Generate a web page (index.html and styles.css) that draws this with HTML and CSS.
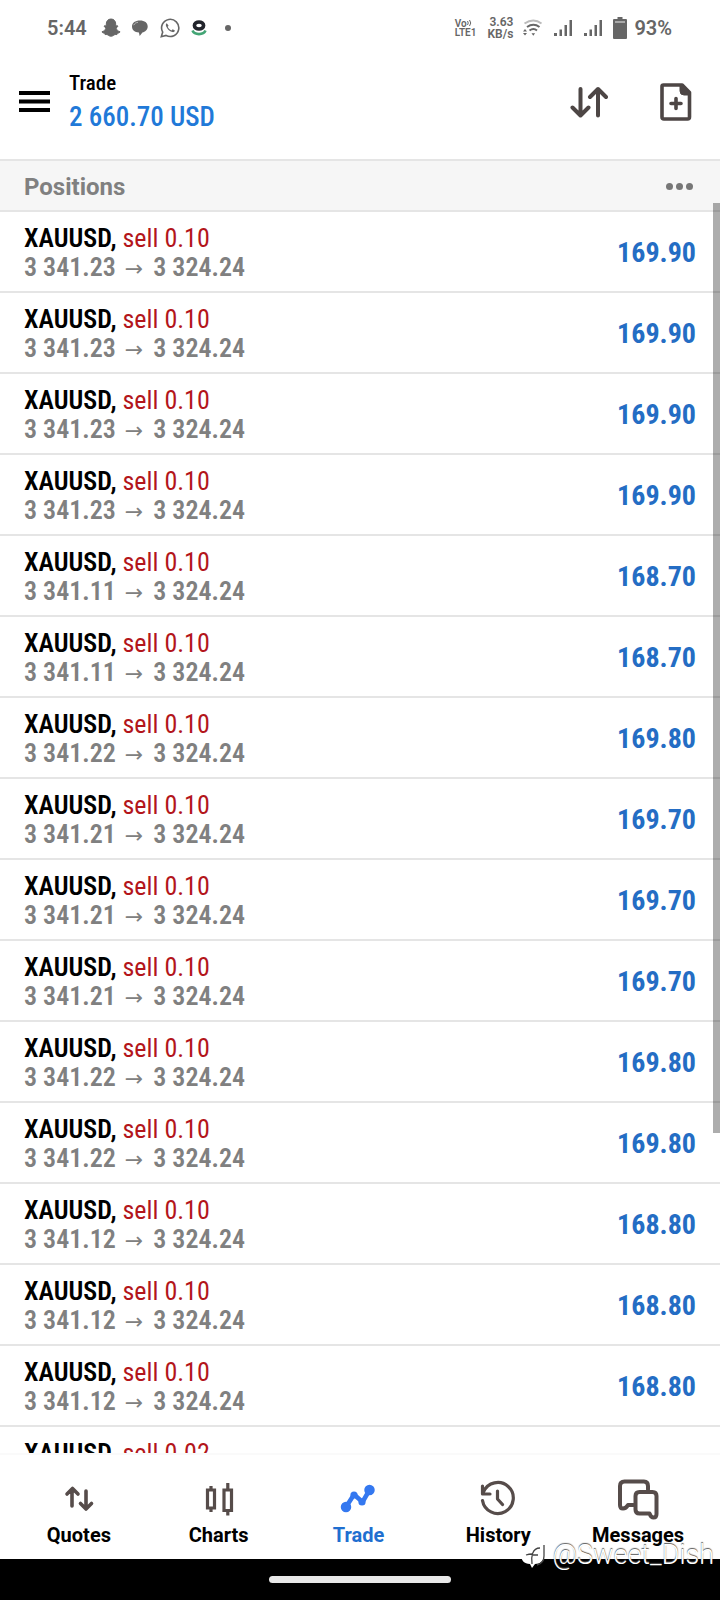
FILE: index.html
```
<!DOCTYPE html>
<html lang="en">
<head>
<meta charset="utf-8">
<meta name="viewport" content="width=device-width, initial-scale=1">
<title>Trade</title>
<link rel="stylesheet" href="styles.css">
</head>
<body>
<div class="app">
  <div class="status">
    <span class="clock">5:44</span>
    <svg class="s-snap" width="20" height="20" viewBox="0 0 20 20" fill="#666"><path d="M10 1c3 0 4.700 2.200 4.700 5v2l1.800-.3.300.9-1.900 1.300c.8 2 2 3.200 4.100 3.900-.2 1-1.500 1.300-2.700 1.500l-.4 1.300c-1.500-.3-2.300 0-3.200.7-1.600 1.200-3.800 1.200-5.400 0-.9-.7-1.700-1-3.200-.7l-.4-1.300C2.500 15.100 1.200 14.800 1 13.800c2.100-.7 3.300-1.900 4.100-3.900L3.200 8.600l.3-.9 1.800.3V6C5.300 3.200 7 1 10 1z" stroke="#666"/></svg>
    <svg class="s-chat" width="18" height="18" viewBox="0 0 18 18" fill="#666"><path d="M9 1.500c4.600 0 7.700 2.300 7.700 6 0 3.200-2.700 5.600-5.300 5.900L8.700 17l-.8-3.500C3.800 13.300 1 11 1 7.500c0-3.700 3.200-6 8-6z"/><path d="M2.700 6.200C3.500 4.400 5 3.600 7 3.300" stroke="#ccc" fill="none" stroke-width=".8"/></svg>
    <svg class="s-whats" width="20" height="20" viewBox="0 0 20 20" fill="none" stroke="#666" stroke-width="1.600"><path d="M1.300 18.700l1.400-4.600A8.600 8.600 0 1 1 6 17.400z"/><path d="M6.800 5.200c-1 .7-1.200 1.800-.7 3 1.300 3 3.200 4.900 6.200 5.900 1.300.3 2.300-.2 2.600-1.500L12.700 11.300l-1.200 1.200C9.700 11.700 8.500 10.500 7.700 8.700l.9-1z" fill="#666" stroke="none"/></svg>
    <svg class="s-face" width="16" height="18" viewBox="0 0 16 18"><ellipse cx="8" cy="6.500" rx="4.600" ry="3.500" fill="none" stroke="#22242c" stroke-width="3.600"/><path d="M1.500 11.500c2 4.800 11 4.800 13 0" fill="none" stroke="#43a575" stroke-width="2.600"/></svg>
    <span class="dot"></span>
    <span class="volte"><span>Vo<svg width="6" height="8" viewBox="0 0 6 8" fill="none" stroke="#666"><path d="M.5 2q1.500 2 0 4M2.500 1q2.500 3 0 6"/></svg></span><span>LTE1</span></span>
    <span class="speed"><span>3.63</span><span>KB/s</span></span>
    <svg class="s-wifi" width="20" height="18" viewBox="0 0 20 18" fill="none" stroke-width="2"><path d="M1.500 4.500q9-6 17 0" stroke="#bbb"/><path d="M4 8q6.500-4.500 12.500 0M6.500 11.500q4-3 7.500 0" stroke="#666"/><path d="M8.500 14.300h3.600l-1.800 2.400zM0 12.600l2-2.600 2 2.600zM0 14l2 2.600L4 14z" fill="#666"/></svg>
    <svg class="s-sig" width="20" height="18" viewBox="0 0 20 18" fill="#666"><path d="M1 14h3v3H1zM6.500 10.500h2.500V17H6.500zM11.500 6H14v11h-2.500zM16.500 1H19v16h-2.500z"/></svg>
    <svg class="s-sig2" width="20" height="18" viewBox="0 0 20 18" fill="#666"><path d="M1 14h3v3H1zM6.500 10.500h2.500V17H6.500zM11.500 6H14v11h-2.500zM16.500 1H19v16h-2.500z"/></svg>
    <svg class="s-bat" width="14" height="22" viewBox="0 0 14 22"><path d="M4.500 0h5v2H13q1 0 1 1v18q0 1-1 1H1q-1 0-1-1V3q0-1 1-1h3.500z" fill="#666"/><path d="M2 4h10v2H2z" fill="#aaa"/></svg>
    <span class="percent">93%</span>
  </div>

  <header class="bar">
    <button class="icon-btn" aria-label="Menu"><svg width="32" height="22" viewBox="0 0 32 22" fill="#000"><path d="M0 0h31v4H0zM0 8.500h31v4H0zM0 17h31v4H0z"/></svg></button>
    <div class="titles"><h1>Trade</h1><p>2 660.70 USD</p></div>
    <button class="icon-btn" aria-label="Sort"><svg width="38" height="32" viewBox="0 0 38 32" fill="none" stroke="#4d4645" stroke-width="4" stroke-linecap="round" stroke-linejoin="round"><path d="M10.500 3v26M2.500 21.500l8 8 8-8M28 29.500V3M20 11l8-8 8 8"/></svg></button>
    <button class="icon-btn" aria-label="New order"><svg width="32" height="38" viewBox="0 0 32 38" fill="none" stroke="#4d4645"><path d="M3.500 2h18.700L29.500 9.500V34q0 2-2 2H4Q2 36 2 34V3.500Q2 2 3.500 2z" stroke-width="3.600" stroke-linejoin="round"/><path d="M20 2v6q0 4 4 4h6V9.500L22.500 2z" fill="#4d4645" stroke-width="1"/><path d="M16 15.500v10M11 20.500h10" stroke-width="3.600" stroke-linecap="round"/></svg></button>
  </header>

  <main class="trade">
    <div class="section">
      <h2>Positions</h2>
      <button class="more" aria-label="Positions menu"><span></span><span></span><span></span></button>
    </div>
    <ul class="list">
      <li><div><p class="deal"><b>XAUUSD,</b> sell 0.10</p><p class="price">3 341.23 <i>→</i> 3 324.24</p></div><span class="profit">169.90</span></li>
      <li><div><p class="deal"><b>XAUUSD,</b> sell 0.10</p><p class="price">3 341.23 <i>→</i> 3 324.24</p></div><span class="profit">169.90</span></li>
      <li><div><p class="deal"><b>XAUUSD,</b> sell 0.10</p><p class="price">3 341.23 <i>→</i> 3 324.24</p></div><span class="profit">169.90</span></li>
      <li><div><p class="deal"><b>XAUUSD,</b> sell 0.10</p><p class="price">3 341.23 <i>→</i> 3 324.24</p></div><span class="profit">169.90</span></li>
      <li><div><p class="deal"><b>XAUUSD,</b> sell 0.10</p><p class="price">3 341.11 <i>→</i> 3 324.24</p></div><span class="profit">168.70</span></li>
      <li><div><p class="deal"><b>XAUUSD,</b> sell 0.10</p><p class="price">3 341.11 <i>→</i> 3 324.24</p></div><span class="profit">168.70</span></li>
      <li><div><p class="deal"><b>XAUUSD,</b> sell 0.10</p><p class="price">3 341.22 <i>→</i> 3 324.24</p></div><span class="profit">169.80</span></li>
      <li><div><p class="deal"><b>XAUUSD,</b> sell 0.10</p><p class="price">3 341.21 <i>→</i> 3 324.24</p></div><span class="profit">169.70</span></li>
      <li><div><p class="deal"><b>XAUUSD,</b> sell 0.10</p><p class="price">3 341.21 <i>→</i> 3 324.24</p></div><span class="profit">169.70</span></li>
      <li><div><p class="deal"><b>XAUUSD,</b> sell 0.10</p><p class="price">3 341.21 <i>→</i> 3 324.24</p></div><span class="profit">169.70</span></li>
      <li><div><p class="deal"><b>XAUUSD,</b> sell 0.10</p><p class="price">3 341.22 <i>→</i> 3 324.24</p></div><span class="profit">169.80</span></li>
      <li><div><p class="deal"><b>XAUUSD,</b> sell 0.10</p><p class="price">3 341.22 <i>→</i> 3 324.24</p></div><span class="profit">169.80</span></li>
      <li><div><p class="deal"><b>XAUUSD,</b> sell 0.10</p><p class="price">3 341.12 <i>→</i> 3 324.24</p></div><span class="profit">168.80</span></li>
      <li><div><p class="deal"><b>XAUUSD,</b> sell 0.10</p><p class="price">3 341.12 <i>→</i> 3 324.24</p></div><span class="profit">168.80</span></li>
      <li><div><p class="deal"><b>XAUUSD,</b> sell 0.10</p><p class="price">3 341.12 <i>→</i> 3 324.24</p></div><span class="profit">168.80</span></li>
      <li><div><p class="deal"><b>XAUUSD,</b> sell 0.02</p></div></li>
    </ul>
    <span class="thumb"></span>
  </main>

  <nav class="tabs">
    <a href="#quotes"><svg width="44" height="44" viewBox="0 0 44 44" fill="none" stroke="#564c4a" stroke-width="3.600" stroke-linecap="round" stroke-linejoin="round"><path d="M15 30V13M10 18l5.500-5.500L21 18M29 15v17M23.500 27.500L29 33l5.500-5.500"/></svg>Quotes</a>
    <a href="#charts"><svg width="44" height="44" viewBox="0 0 44 44" fill="none" stroke="#564c4a" stroke-width="3.200"><path d="M10.500 14h7v18h-7zM27 14h7.500v20.500H27zM14 10v4M14 32v4M30.800 7v7M30.800 34.500v5"/></svg>Charts</a>
    <a href="#trade" class="current"><svg width="44" height="44" viewBox="0 0 44 44" fill="#3478f0" stroke="#3478f0" stroke-width="4.500" stroke-linejoin="round"><circle cx="10" cy="31" r="3"/><circle cx="33.500" cy="14" r="3"/><path d="M10 31l8-12.500 8.500 7.500L33.500 14" fill="none"/><g stroke="none"><circle cx="18" cy="19" r="3.600"/><circle cx="26" cy="26" r="3.600"/></g></svg>Trade</a>
    <a href="#history"><svg width="44" height="44" viewBox="0 0 44 44" fill="none" stroke="#564c4a" stroke-width="3.200" stroke-linecap="round" stroke-linejoin="round"><path d="M6.500 24.500a15.500 15.500 0 1 0 1-8.500M6.500 10v8h7.500M21.500 15v8l5 5.500"/></svg>History</a>
    <a href="#messages"><svg width="44" height="44" viewBox="0 0 44 44" fill="none" stroke="#564c4a" stroke-width="4" stroke-linecap="round" stroke-linejoin="round"><path d="M17.500 29h-5.500q-2 3.500-5 3.500Q4 32.500 4 29V10q0-4.500 4.500-4.500H28q4 0 4 4.500v3.500"/><path d="M23.500 16h13q4 0 4 4v18q0 3.500-3 3.500-2.500 0-4-4h-10q-4 0-4-4V20q0-4 4-4z"/></svg>Messages</a>
  </nav>
  <div class="gesture"><span></span></div>
  <div class="watermark"><svg width="26" height="26" viewBox="0 0 26 26"><path d="M13 2h11v11c0 6-4 9-9 9l-3 4-2-4C4 22 1 18 1 13 1 6 6 2 13 2z" fill="#fff"/><path d="M24 3v11c0 5-3 8-7 9M6 13c3-1 4-1 6-1M12 22c-1-7 0-16 8-16M13 13h5" fill="none" stroke="#444" stroke-width="1.300"/></svg><span>@Sweet_Dish</span></div>
</div>
</body>
</html>
```
FILE: styles.css
```
* { box-sizing: border-box; }
body { margin: 0; background: #fff; font-family: Roboto, "Liberation Sans", sans-serif; }
h1, h2, p, ul { margin: 0; padding: 0; font-weight: 500; }
button { border: 0; padding: 0; background: none; }
svg { display: block; flex: none; }

.app { position: relative; display: flex; flex-direction: column; height: 100vh; overflow: hidden; }

.status { display: flex; align-items: center; height: 55px; padding: 0 48px 0 47px; color: #666; font-weight: 600; font-size: 20px; flex: none; }
.clock { width: 54px; }
.s-chat { margin-left: 10px; }
.s-whats { margin-left: 11px; }
.s-face { margin-left: 11px; }
.dot { width: 6px; height: 6px; margin-left: 18px; border-radius: 50%; background: #666; }
.volte, .speed { display: flex; flex-direction: column; font-size: 12px; line-height: 12px; text-align: right; }
.volte { margin-left: auto; font-size: 10px; line-height: 9px; text-align: left; }
.volte svg { display: inline-block; }
.speed { margin: 0 10px 0 11px; }
.s-sig { margin-left: 10px; }
.s-sig2 { margin: 0 10px; }
.percent { margin-left: 7px; }

.bar { display: flex; align-items: center; height: 104px; padding: 0 28px 10px 19px; flex: none; }
.titles { flex: 1; margin-left: 18px; font-family: "Roboto Condensed", "Liberation Sans Narrow", Roboto, sans-serif; }
.titles h1 { font-size: 21px; line-height: 30px; }
.titles p { font-size: 27px; line-height: 38px; color: #2179d8; }
.bar .icon-btn:last-child { margin-left: 52px; }

.trade { position: relative; display: flex; flex-direction: column; flex: 1; min-height: 0; overflow: hidden; }
.section { display: flex; align-items: center; justify-content: space-between; height: 53px; padding: 2px 27px 0 24px; border: solid #e5e5e5; border-width: 2px 0; background: #f6f6f6; flex: none; }
.section h2 { font-size: 24px; font-weight: 700; color: #808080; }
.more { display: flex; gap: 3px; }
.more span { width: 7px; height: 7px; border-radius: 50%; background: #777; }

.list { list-style: none; font-family: "Roboto Condensed", "Liberation Sans Narrow", Roboto, sans-serif; }
.list li { display: flex; align-items: center; justify-content: space-between; padding: 12px 24px 9px; border-bottom: 2px solid #e5e5e5; }
.deal, .price { font-size: 26px; line-height: 29px; }
.deal { color: #b3151b; font-weight: 400; }
.deal b { color: #000; font-weight: 600; }
.price { color: #808080; font-weight: 600; }
.price i { margin: 0 4px 0 3px; font-family: "DejaVu Sans", sans-serif; font-size: 22px; font-style: normal; font-weight: 400; line-height: 1; }
.profit { font-size: 28px; font-weight: 700; line-height: 58px; color: #246dc4; }
.thumb { position: absolute; top: 44px; right: 0; width: 7px; height: 930px; background: rgba(0, 0, 0, .32); }

.tabs { display: grid; grid-template-columns: repeat(5, 1fr); height: 106px; padding: 0 12px 0 9px; border-top: 2px solid #fafafa; background: #fff; flex: none; }
.tabs a { display: flex; flex-direction: column; align-items: center; padding-top: 21px; font-size: 20px; font-weight: 700; line-height: 30px; color: #000; text-decoration: none; }
.tabs .current { color: #1f6fd0; }
.gesture { display: flex; align-items: center; justify-content: center; height: 41px; background: #000; flex: none; }
.gesture span { width: 182px; height: 7px; border-radius: 4px; background: #e8e8e8; }
.watermark { position: absolute; right: 6px; bottom: 29px; display: flex; align-items: center; gap: 6px; font-size: 27px; font-weight: 300; line-height: 32px; color: #fff; text-shadow: 0 -1px 1px #555; }
```
